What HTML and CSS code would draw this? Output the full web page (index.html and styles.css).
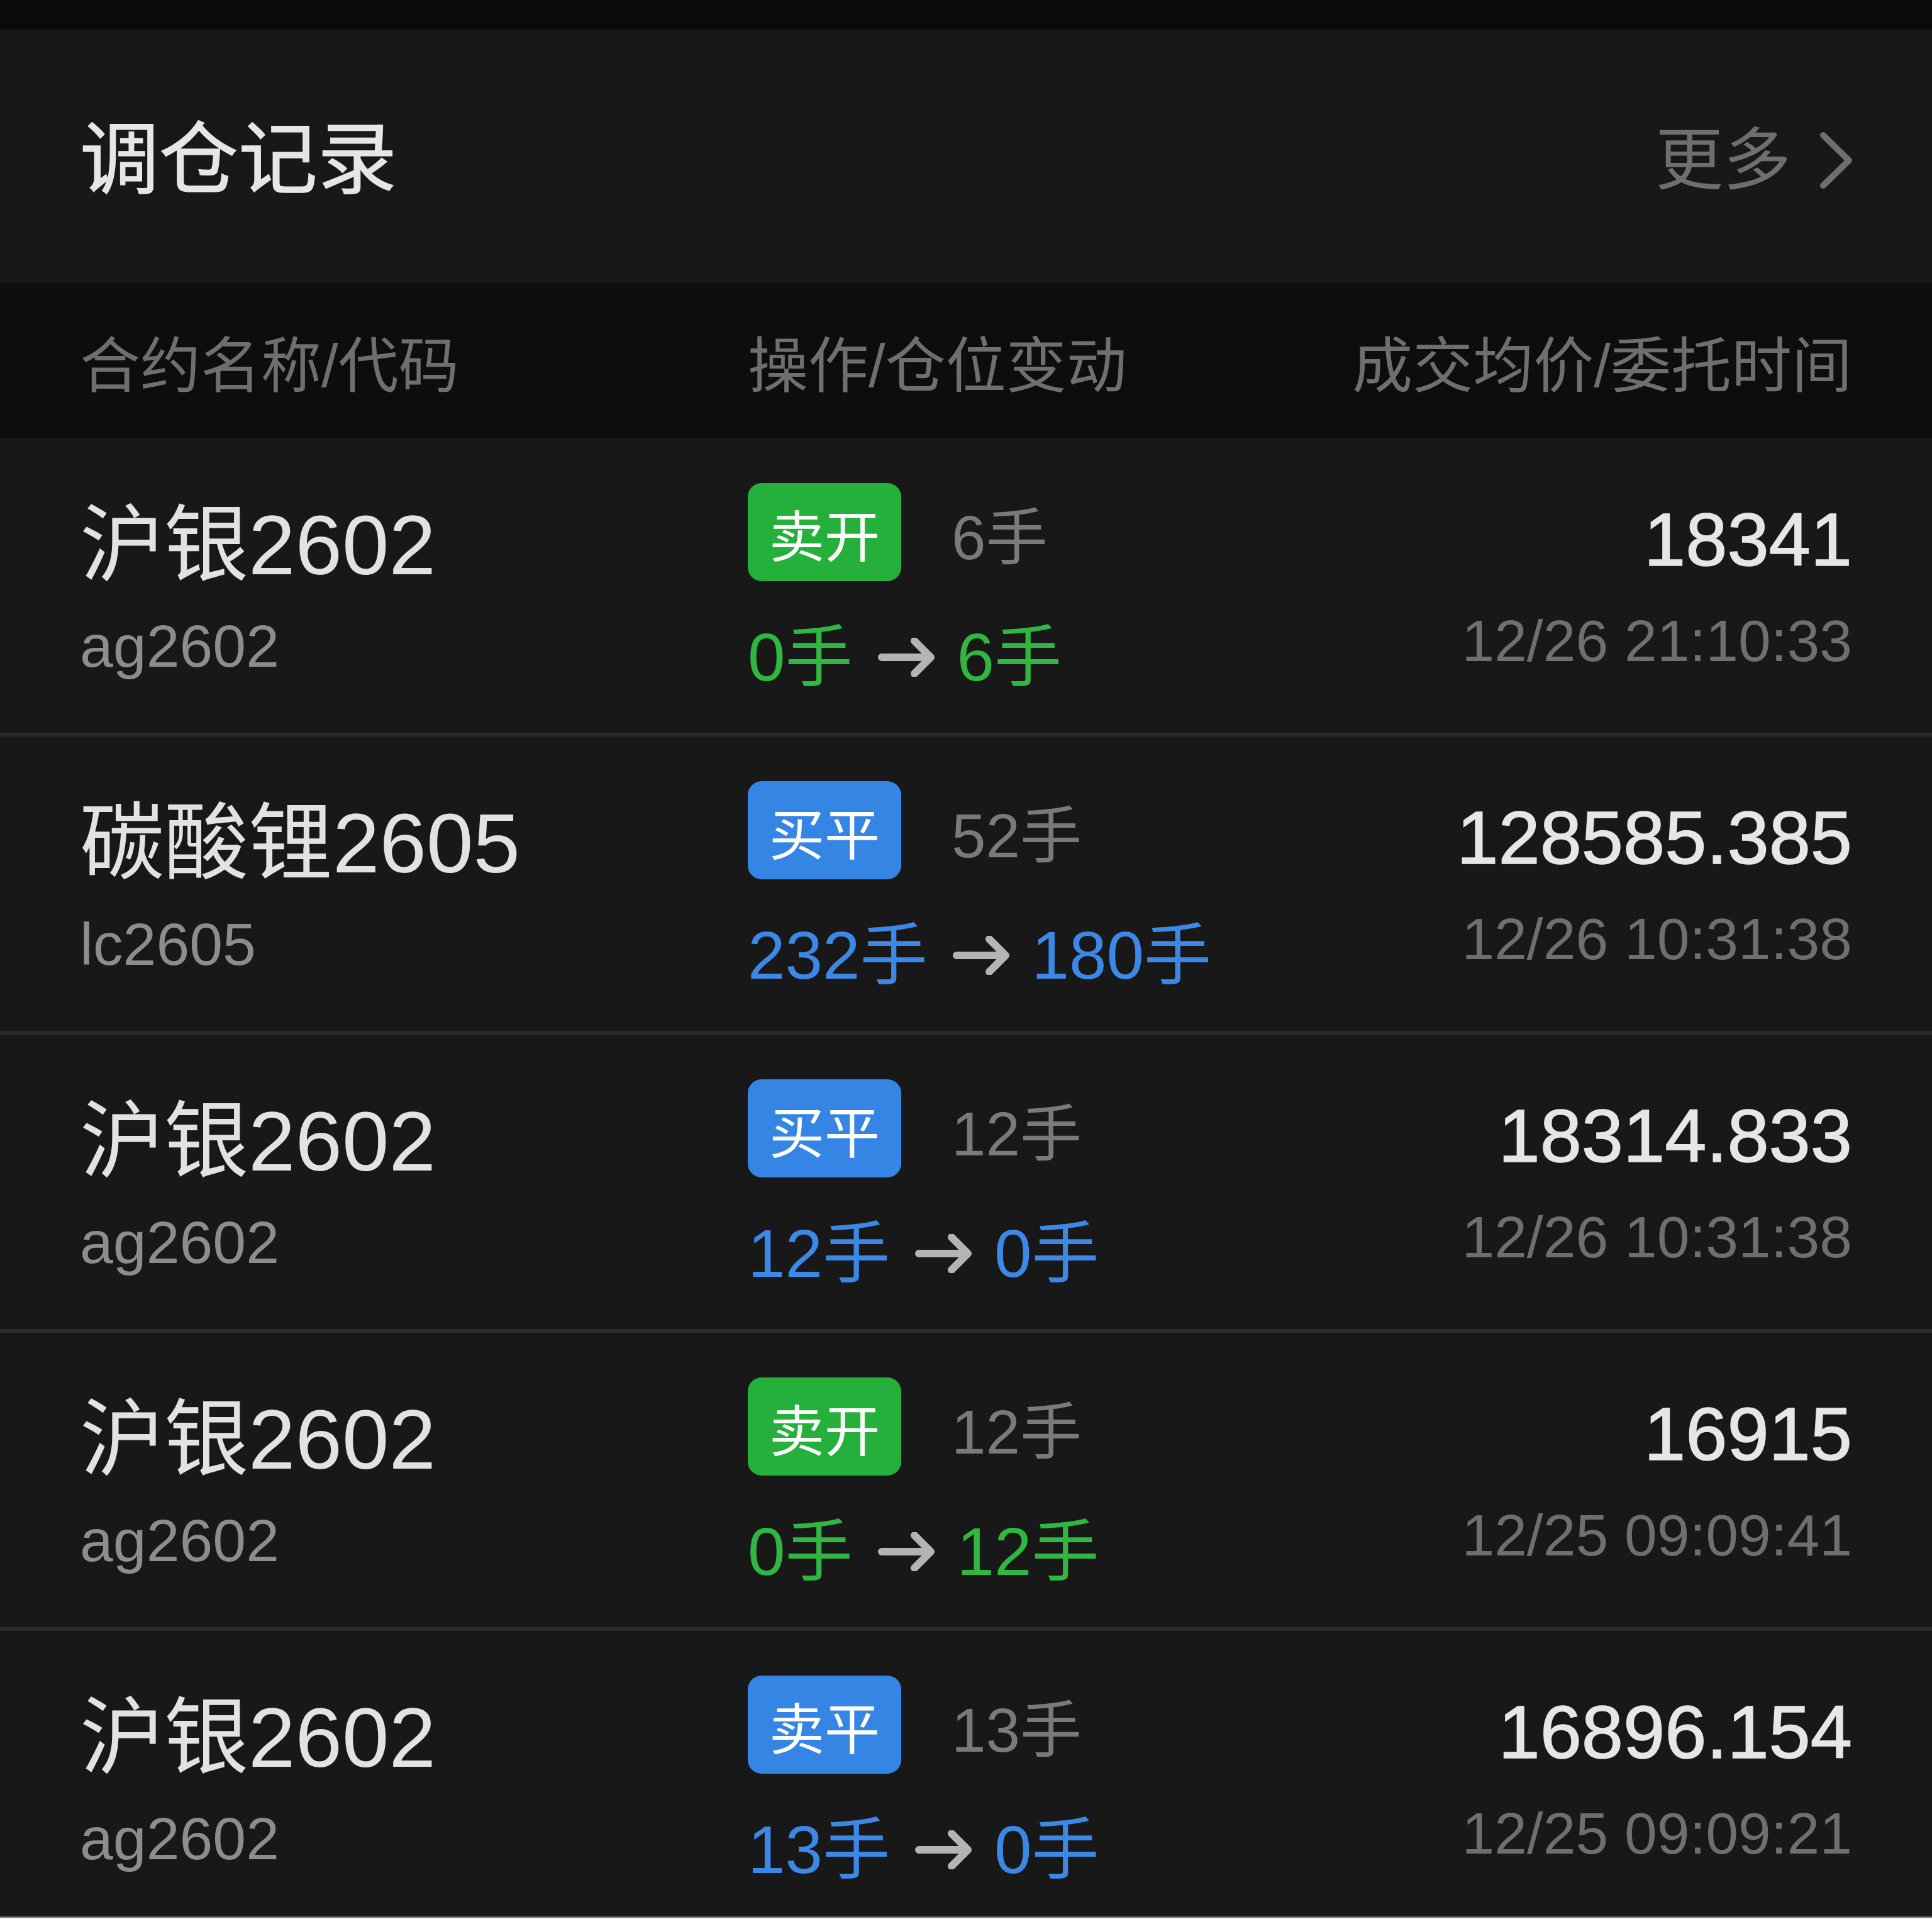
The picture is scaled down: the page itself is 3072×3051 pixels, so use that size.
FILE: index.html
```html
<!DOCTYPE html>
<html lang="zh-CN">
<head>
    <meta charset="UTF-8">
    <meta name="viewport" content="width=device-width, initial-scale=1.0">
    <title>调仓记录</title>
    <link rel="stylesheet" href="styles.css">
</head>
<body>
    <div class="page">
        <div class="status-bar"></div>

        <div class="section-head">
            <h1 class="title">调仓记录</h1>
            <a class="more" href="#">
                <span>更多</span>
                <svg class="chevron" viewBox="0 0 51 90" width="51" height="90">
                    <path d="M5 5 L46 45 L5 85" fill="none" stroke="currentColor" stroke-width="10" stroke-linecap="round" stroke-linejoin="round"/>
                </svg>
            </a>
        </div>

        <div class="table-head">
            <div>合约名称/代码</div>
            <div>操作/仓位变动</div>
            <div class="right">成交均价/委托时间</div>
        </div>

        <ul class="records">
            <li class="record">
                <div class="col-name">
                    <div class="name">沪银2602</div>
                    <div class="code">ag2602</div>
                </div>
                <div class="col-op">
                    <div class="op">
                        <span class="badge green">卖开</span>
                        <span class="qty">6手</span>
                    </div>
                    <div class="change green-text">0手<svg class="arrow" viewBox="0 0 92 62" width="92" height="62"><path d="M6 31 H84 M58 5 L84 31 L58 57" fill="none" stroke="currentColor" stroke-width="12" stroke-linecap="round" stroke-linejoin="round"/></svg>6手</div>
                </div>
                <div class="col-price">
                    <div class="price">18341</div>
                    <div class="time">12/26 21:10:33</div>
                </div>
            </li>
            <li class="record">
                <div class="col-name">
                    <div class="name">碳酸锂2605</div>
                    <div class="code">lc2605</div>
                </div>
                <div class="col-op">
                    <div class="op">
                        <span class="badge blue">买平</span>
                        <span class="qty">52手</span>
                    </div>
                    <div class="change blue-text">232手<svg class="arrow" viewBox="0 0 92 62" width="92" height="62"><path d="M6 31 H84 M58 5 L84 31 L58 57" fill="none" stroke="currentColor" stroke-width="12" stroke-linecap="round" stroke-linejoin="round"/></svg>180手</div>
                </div>
                <div class="col-price">
                    <div class="price">128585.385</div>
                    <div class="time">12/26 10:31:38</div>
                </div>
            </li>
            <li class="record">
                <div class="col-name">
                    <div class="name">沪银2602</div>
                    <div class="code">ag2602</div>
                </div>
                <div class="col-op">
                    <div class="op">
                        <span class="badge blue">买平</span>
                        <span class="qty">12手</span>
                    </div>
                    <div class="change blue-text">12手<svg class="arrow" viewBox="0 0 92 62" width="92" height="62"><path d="M6 31 H84 M58 5 L84 31 L58 57" fill="none" stroke="currentColor" stroke-width="12" stroke-linecap="round" stroke-linejoin="round"/></svg>0手</div>
                </div>
                <div class="col-price">
                    <div class="price">18314.833</div>
                    <div class="time">12/26 10:31:38</div>
                </div>
            </li>
            <li class="record">
                <div class="col-name">
                    <div class="name">沪银2602</div>
                    <div class="code">ag2602</div>
                </div>
                <div class="col-op">
                    <div class="op">
                        <span class="badge green">卖开</span>
                        <span class="qty">12手</span>
                    </div>
                    <div class="change green-text">0手<svg class="arrow" viewBox="0 0 92 62" width="92" height="62"><path d="M6 31 H84 M58 5 L84 31 L58 57" fill="none" stroke="currentColor" stroke-width="12" stroke-linecap="round" stroke-linejoin="round"/></svg>12手</div>
                </div>
                <div class="col-price">
                    <div class="price">16915</div>
                    <div class="time">12/25 09:09:41</div>
                </div>
            </li>
            <li class="record">
                <div class="col-name">
                    <div class="name">沪银2602</div>
                    <div class="code">ag2602</div>
                </div>
                <div class="col-op">
                    <div class="op">
                        <span class="badge blue">卖平</span>
                        <span class="qty">13手</span>
                    </div>
                    <div class="change blue-text">13手<svg class="arrow" viewBox="0 0 92 62" width="92" height="62"><path d="M6 31 H84 M58 5 L84 31 L58 57" fill="none" stroke="currentColor" stroke-width="12" stroke-linecap="round" stroke-linejoin="round"/></svg>0手</div>
                </div>
                <div class="col-price">
                    <div class="price">16896.154</div>
                    <div class="time">12/25 09:09:21</div>
                </div>
            </li>
        </ul>
    </div>
</body>
</html>
```

FILE: styles.css
```css
:root {
    --bg: #181818;
    --bg-dark: #0d0d0d;
    --text: #e2e2e2;
    --muted: #6f6f6f;
    --code: #8d8d8d;
    --green: #25b03b;
    --green-text: #2fb742;
    --blue: #3585e4;
    --blue-text: #3b88e6;
    --line: #2a2a2a;
}

html {
    background-color: #eeeeee;
}

body {
    margin: 0;
    font-family: "Liberation Sans", "Noto Sans CJK SC", sans-serif;
    color: var(--text);
}

.page {
    height: 3047px;
    overflow: hidden;
    background-color: var(--bg);
    border-bottom: 2px solid #7a7a7a;
}

.status-bar {
    height: 47px;
    background-color: #0a0a0a;
}

.section-head {
    box-sizing: border-box;
    height: 403px;
    padding: 12px 127px 0;
    display: flex;
    align-items: center;
    justify-content: space-between;
}

.title {
    margin: 0;
    font-size: 126px;
    font-weight: normal;
    line-height: 1;
    color: #e6e6e6;
    -webkit-text-stroke: 1.2px #e6e6e6;
}

.more {
    display: flex;
    align-items: center;
    gap: 46px;
    font-size: 108px;
    line-height: 1;
    color: var(--muted);
    text-decoration: none;
}

.chevron {
    display: block;
}

.table-head {
    height: 247px;
    padding: 0 127px;
    display: grid;
    grid-template-columns: 1062px 1fr auto;
    align-items: center;
    background-color: var(--bg-dark);
    font-size: 96px;
    color: var(--muted);
}

.right {
    text-align: right;
}

.records {
    list-style: none;
    margin: 0;
    padding: 0;
}

.record {
    height: 468px;
    padding: 0 127px;
    display: grid;
    grid-template-columns: 1062px 1fr auto;
    border-bottom: 6px solid var(--line);
}

.col-name,
.col-op,
.col-price {
    display: flex;
    flex-direction: column;
}

.col-name {
    padding-top: 104px;
}

.name {
    font-size: 134px;
    line-height: 132px;
    color: var(--text);
}

.code {
    margin-top: 44px;
    font-size: 95px;
    line-height: 100px;
    color: var(--code);
}

.col-op {
    padding-top: 71px;
}

.op {
    height: 156px;
    display: flex;
    align-items: center;
}

.badge {
    width: 244px;
    height: 156px;
    border-radius: 22px;
    display: flex;
    align-items: center;
    justify-content: center;
    font-size: 88px;
    color: #ffffff;
}

.badge.green {
    background-color: var(--green);
}

.badge.blue {
    background-color: var(--blue);
}

.qty {
    margin-left: 80px;
    font-size: 98px;
    color: #7a7a7a;
}

.change {
    margin-top: 66px;
    display: flex;
    align-items: center;
    font-size: 107px;
    line-height: 110px;
}

.green-text {
    color: var(--green-text);
}

.blue-text {
    color: var(--blue-text);
}

.arrow {
    margin: 0 34px 0 40px;
    color: #b4b4b4;
}

.col-price {
    align-items: flex-end;
    padding-top: 101px;
}

.price {
    font-size: 119px;
    line-height: 120px;
    color: #e6e6e6;
    -webkit-text-stroke: 1.5px #e6e6e6;
}

.time {
    margin-top: 51px;
    font-size: 93px;
    line-height: 100px;
    color: var(--muted);
}
```
